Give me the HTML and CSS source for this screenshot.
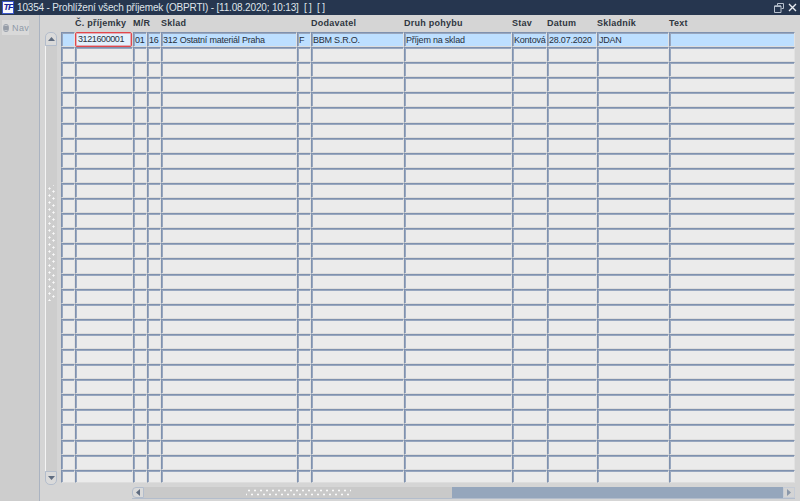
FILE: index.html
```html
<!DOCTYPE html>
<html lang="cs">
<head>
<meta charset="utf-8">
<title>Prohlížení všech příjemek</title>
<link rel="stylesheet" href="styles.css">
</head>
<body>
<div class="window">
  <header class="titlebar">
    <span class="logo">TF</span>
    <span class="title">10354 - Prohlížení všech příjemek (OBPRTI) - [11.08.2020; 10:13]&nbsp; [ ]&nbsp; [ ]</span>
    <span class="winbtns">
      <svg class="winicon" width="10" height="10" viewBox="0 0 10 10"><path d="M3.5 2.5V.5h6v5h-2M.5 3h6.5v6.5H.5z" fill="none" stroke="#b9c2cf"/><path d="M.5 3.2H7" stroke="#b9c2cf" stroke-width="1.4"/></svg>
      <svg class="winicon" width="9" height="9" viewBox="0 0 9 9"><path d="M1 1l7 7M8 1L1 8" stroke="#e8ecf2" stroke-width="1.4"/></svg>
    </span>
  </header>
  <div class="body">
    <aside class="side">
      <div class="navtab"><span class="radio"></span><span class="navlabel">Nav</span></div>
    </aside>
    <main class="content">
      <div class="upper">
        <div class="vscroll">
          <div class="sbtn up"><svg width="7" height="4" viewBox="0 0 7 4"><path d="M3.5 0L7 4H0z" fill="#5f6c80"/></svg></div>
          <div class="vtrack"><div class="vdots"></div></div>
          <div class="sbtn down"><svg width="7" height="4" viewBox="0 0 7 4"><path d="M0 0h7L3.5 4z" fill="#5f6c80"/></svg></div>
        </div>
        <div class="table">
          <div class="row head">
            <b></b><b>Č. příjemky</b><b>M/R</b><b></b><b>Sklad</b><b></b><b>Dodavatel</b><b>Druh pohybu</b><b>Stav</b><b>Datum</b><b>Skladník</b><b>Text</b>
          </div>
          <div class="row sel">
            <i></i><i class="current">3121600001</i><i>01</i><i>16</i><i>312 Ostatní materiál Praha</i><i>F</i><i>BBM S.R.O.</i><i>Příjem na sklad</i><i>Kontová</i><i>28.07.2020</i><i>JDAN</i><i></i>
          </div>
          <div class="row"><i></i><i></i><i></i><i></i><i></i><i></i><i></i><i></i><i></i><i></i><i></i><i></i></div>
          <div class="row"><i></i><i></i><i></i><i></i><i></i><i></i><i></i><i></i><i></i><i></i><i></i><i></i></div>
          <div class="row"><i></i><i></i><i></i><i></i><i></i><i></i><i></i><i></i><i></i><i></i><i></i><i></i></div>
          <div class="row"><i></i><i></i><i></i><i></i><i></i><i></i><i></i><i></i><i></i><i></i><i></i><i></i></div>
          <div class="row"><i></i><i></i><i></i><i></i><i></i><i></i><i></i><i></i><i></i><i></i><i></i><i></i></div>
          <div class="row"><i></i><i></i><i></i><i></i><i></i><i></i><i></i><i></i><i></i><i></i><i></i><i></i></div>
          <div class="row"><i></i><i></i><i></i><i></i><i></i><i></i><i></i><i></i><i></i><i></i><i></i><i></i></div>
          <div class="row"><i></i><i></i><i></i><i></i><i></i><i></i><i></i><i></i><i></i><i></i><i></i><i></i></div>
          <div class="row"><i></i><i></i><i></i><i></i><i></i><i></i><i></i><i></i><i></i><i></i><i></i><i></i></div>
          <div class="row"><i></i><i></i><i></i><i></i><i></i><i></i><i></i><i></i><i></i><i></i><i></i><i></i></div>
          <div class="row"><i></i><i></i><i></i><i></i><i></i><i></i><i></i><i></i><i></i><i></i><i></i><i></i></div>
          <div class="row"><i></i><i></i><i></i><i></i><i></i><i></i><i></i><i></i><i></i><i></i><i></i><i></i></div>
          <div class="row"><i></i><i></i><i></i><i></i><i></i><i></i><i></i><i></i><i></i><i></i><i></i><i></i></div>
          <div class="row"><i></i><i></i><i></i><i></i><i></i><i></i><i></i><i></i><i></i><i></i><i></i><i></i></div>
          <div class="row"><i></i><i></i><i></i><i></i><i></i><i></i><i></i><i></i><i></i><i></i><i></i><i></i></div>
          <div class="row"><i></i><i></i><i></i><i></i><i></i><i></i><i></i><i></i><i></i><i></i><i></i><i></i></div>
          <div class="row"><i></i><i></i><i></i><i></i><i></i><i></i><i></i><i></i><i></i><i></i><i></i><i></i></div>
          <div class="row"><i></i><i></i><i></i><i></i><i></i><i></i><i></i><i></i><i></i><i></i><i></i><i></i></div>
          <div class="row"><i></i><i></i><i></i><i></i><i></i><i></i><i></i><i></i><i></i><i></i><i></i><i></i></div>
          <div class="row"><i></i><i></i><i></i><i></i><i></i><i></i><i></i><i></i><i></i><i></i><i></i><i></i></div>
          <div class="row"><i></i><i></i><i></i><i></i><i></i><i></i><i></i><i></i><i></i><i></i><i></i><i></i></div>
          <div class="row"><i></i><i></i><i></i><i></i><i></i><i></i><i></i><i></i><i></i><i></i><i></i><i></i></div>
          <div class="row"><i></i><i></i><i></i><i></i><i></i><i></i><i></i><i></i><i></i><i></i><i></i><i></i></div>
          <div class="row"><i></i><i></i><i></i><i></i><i></i><i></i><i></i><i></i><i></i><i></i><i></i><i></i></div>
          <div class="row"><i></i><i></i><i></i><i></i><i></i><i></i><i></i><i></i><i></i><i></i><i></i><i></i></div>
          <div class="row"><i></i><i></i><i></i><i></i><i></i><i></i><i></i><i></i><i></i><i></i><i></i><i></i></div>
          <div class="row"><i></i><i></i><i></i><i></i><i></i><i></i><i></i><i></i><i></i><i></i><i></i><i></i></div>
          <div class="row"><i></i><i></i><i></i><i></i><i></i><i></i><i></i><i></i><i></i><i></i><i></i><i></i></div>
          <div class="row"><i></i><i></i><i></i><i></i><i></i><i></i><i></i><i></i><i></i><i></i><i></i><i></i></div>
        </div>
      </div>
      <div class="hscroll">
        <div class="sbtn left"><svg width="4" height="7" viewBox="0 0 4 7"><path d="M4 0v7L0 3.5z" fill="#5f6c80"/></svg></div>
        <div class="hthumb"><div class="hdots"></div></div>
        <div class="hrest"></div>
        <div class="sbtn right"><svg width="4" height="7" viewBox="0 0 4 7"><path d="M0 0l4 3.5L0 7z" fill="#8b98aa"/></svg></div>
      </div>
    </main>
  </div>
</div>
</body>
</html>
```
FILE: styles.css
```css
* { box-sizing: border-box; }
html, body { margin: 0; padding: 0; }
body {
  width: 800px;
  height: 501px;
  overflow: hidden;
  font-family: "Liberation Sans", Arial, sans-serif;
  font-size: 9px;
  color: #2e3440;
  background: #d5d5d5;
}
.window { display: flex; flex-direction: column; height: 501px; }

.titlebar {
  flex: 0 0 15px;
  display: flex;
  align-items: center;
  background: #26364f;
  color: #dfe4ea;
  font-size: 10px;
  letter-spacing: -.17px;
  padding-left: 2px;
}
.logo {
  flex: 0 0 12px;
  height: 13px;
  background: #f6f8fd;
  border: 1px solid #3a55c8;
  color: #14209a;
  font: italic bold 9px/11px "Liberation Sans", sans-serif;
  text-align: center;
  letter-spacing: -1px;
  margin-right: 3px;
}
.title { flex: 1; white-space: nowrap; }
.winbtns { display: flex; align-items: center; gap: 4px; padding-right: 3px; letter-spacing: 0; }

.body { flex: 1; display: flex; min-height: 0; }
.side {
  flex: 0 0 40px;
  background: #cdcdcd;
  border-right: 1px solid #aab3c1;
  padding: 5px 0 0 2px;
}
.navtab {
  width: 27px;
  height: 15px;
  background: #d9d9d9;
  display: flex;
  align-items: center;
  gap: 3px;
  padding-left: 1px;
}
.radio {
  width: 8px;
  height: 8px;
  border-radius: 50%;
  background: radial-gradient(circle at 50% 50%, #979da7 0 2.2px, #eeeeee 2.8px);
  border: 1px solid #9ba2ad;
}
.navlabel { color: #8f9aa8; font-size: 9px; letter-spacing: .3px; }

.content { flex: 1; display: flex; flex-direction: column; min-width: 0; }
.upper { display: flex; height: 470px; padding-left: 5px; }

.vscroll {
  flex: 0 0 12px;
  margin-top: 17px;
  height: 453px;
  display: flex;
  flex-direction: column;
}
.vtrack {
  flex: 1;
  background: #cdcdcd;
  border-left: 1px solid #f4f4f4;
  display: flex;
  align-items: center;
  justify-content: center;
}
.vdots {
  width: 7px;
  height: 116px;
  margin-top: -32px;
  background-image:
    radial-gradient(circle, #fafafa 0 .9px, transparent 1.2px),
    radial-gradient(circle, #fafafa 0 .9px, transparent 1.2px);
  background-size: 3px 7px, 3px 7px;
  background-position: 0 0, 4px 3px;
  background-repeat: repeat-y;
}
.sbtn {
  flex: 0 0 auto;
  display: flex;
  align-items: center;
  justify-content: center;
  background: #dadada;
  border: 1px solid #b3bdcc;
}
.sbtn.up { height: 14px; border-radius: 5px 5px 0 0; }
.sbtn.down { height: 14px; border-radius: 0 0 5px 5px; }
.sbtn.left { width: 12px; border-radius: 4px 0 0 4px; }
.sbtn.right { width: 12px; background: #d4d4d4; border-color: #c6ccd6; }

.table { margin-left: 4px; width: 735px; display: flex; flex-direction: column; }
.row {
  display: grid;
  grid-template-columns: 14px 58px 14px 14px 136px 14px 93px 108px 35px 50px 72px 126px;
  height: 15.1px;
}
.row:last-child { height: 13px; }
.row.head { height: 17px; }
.row.head b {
  font-size: 9px;
  letter-spacing: .25px;
  line-height: 16px;
  white-space: nowrap;
  color: #2f3540;
}
.row i {
  display: block;
  font-style: normal;
  background: #ebebeb;
  border-top: 1px solid #7f91ae;
  border-left: 1px solid #7f91ae;
  border-right: 1px solid #e2e2e2;
  border-bottom: 1px solid #dddddd;
  box-shadow: inset 1px 1px 0 #98a7bf;
  letter-spacing: -.22px;
  line-height: 14px;
  padding-left: 1px;
  white-space: nowrap;
  overflow: hidden;
  color: #28303c;
}
.row.sel i { background: #bddfff; }
.row i.current {
  border: 1px solid #e2474b;
  box-shadow: inset 0 0 0 1px rgba(226, 71, 75, .4);
  border-radius: 2px;
  background: #e2f0fd;
  letter-spacing: -.4px;
  padding-left: 2px;
  margin-right: 1px;
  line-height: 13px;
}

.hscroll {
  display: flex;
  height: 12px;
  margin: 2px 5px 0 92px;
  border-bottom: 1px solid #b3bdcc;
}
.hthumb {
  flex: 0 0 308px;
  background: #c9c9c9;
  display: flex;
  justify-content: center;
  align-items: center;
}
.hdots {
  width: 105px;
  height: 7px;
  background-image:
    radial-gradient(circle, #fafafa 0 .9px, transparent 1.2px),
    radial-gradient(circle, #fafafa 0 .9px, transparent 1.2px);
  background-size: 6px 7px, 6px 7px;
  background-position: 0 -2px, 3px 2px;
}
.hrest { flex: 1; background: #95a6bc; }
```
